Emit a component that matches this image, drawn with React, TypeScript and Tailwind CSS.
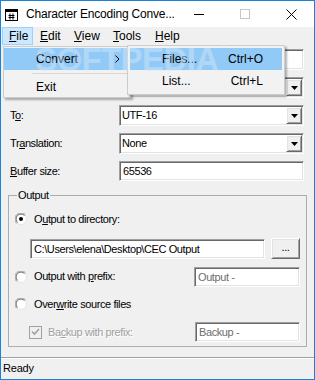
import React from "react";

const sunken =
  "border border-t-[#a0a0a0] border-l-[#a0a0a0] border-b-white border-r-white shadow-[inset_1px_1px_0_#696969,inset_-1px_-1px_0_#e3e3e3] bg-white";
const raised =
  "border border-t-white border-l-white border-b-[#696969] border-r-[#696969] shadow-[inset_1px_1px_0_#e3e3e3,inset_-1px_-1px_0_#a0a0a0] bg-[#f0f0f0]";

function DownArrow() {
  return (
    <svg width="7" height="4" viewBox="0 0 7 4">
      <path d="M0 0h7L3.5 4z" fill="#000" />
    </svg>
  );
}

function Combo({ value }: { value: string }) {
  return (
    <div className={`${sunken} flex h-[21px] w-[185px] items-stretch p-px`}>
      <span className="flex flex-1 items-center pl-[1px]">{value}</span>
      <span className={`${raised} flex w-[16px] items-center justify-center`}>
        <DownArrow />
      </span>
    </div>
  );
}

function Radio({ checked }: { checked?: boolean }) {
  return (
    <svg width="12" height="12" viewBox="0 0 12 12" className="shrink-0">
      <circle cx="6" cy="6" r="5.5" fill="#fff" stroke="#e3e3e3" />
      <path d="M1.6 10.4A5.5 5.5 0 0 1 10.4 1.6" fill="none" stroke="#a0a0a0" />
      <path d="M2.5 9.5A4.5 4.5 0 0 1 9.5 2.5" fill="none" stroke="#696969" />
      {checked && <circle cx="6" cy="6" r="2" fill="#000" />}
    </svg>
  );
}

function Field({ value, gray, className }: { value: string; gray?: boolean; className: string }) {
  return (
    <div className={`${sunken} flex h-[20px] items-center pl-[3px] ${gray ? "text-[#6d6d6d]" : ""} ${className}`}>
      {value}
    </div>
  );
}

export default function App() {
  return (
    <div className="relative flex h-[380px] w-[315px] flex-col overflow-hidden border border-[#1883d7] bg-[#f0f0f0] font-['Liberation_Sans',Arial,sans-serif] text-black">
      {/* Title bar */}
      <div className="flex h-[26px] items-center bg-white">
        <svg width="13" height="12" viewBox="0 0 13 12" className="ml-[4px] mt-[2px]">
          <rect x="0.5" y="0.5" width="12" height="11" fill="#fff" stroke="#000" />
          <rect x="0" y="0" width="13" height="3" fill="#000" />
          <path d="M5 4.5v6M8 4.5v6M3.5 6.5h6M3.5 8.5h6" stroke="#000" />
        </svg>
        <span className="ml-[8px] text-[12px] tracking-[-0.2px]">Character Encoding Conve...</span>
        <div className="ml-auto flex h-full">
          <div className="flex w-[46px] items-center justify-center">
            <svg width="10" height="10" viewBox="0 0 10 10">
              <path d="M0 5.5h10" stroke="#000" />
            </svg>
          </div>
          <div className="flex w-[46px] items-center justify-center">
            <svg width="10" height="10" viewBox="0 0 10 10">
              <rect x="0.5" y="0.5" width="9" height="9" fill="none" stroke="#c6c6c6" />
            </svg>
          </div>
          <div className="flex w-[46px] items-center justify-center">
            <svg width="11" height="11" viewBox="0 0 11 11">
              <path d="M0.5 0.5l10 10M10.5 0.5l-10 10" stroke="#000" />
            </svg>
          </div>
        </div>
      </div>

      {/* Menu bar */}
      <div className="flex h-[19px] items-start pl-[1px] text-[12px]">
        <span className="h-[18px] w-[31px] border border-[#99d1ff] bg-[#cce8ff] pl-[6px] leading-[16px]">
          <u>F</u>ile
        </span>
        <span className="h-[18px] w-[34px] pl-[7px] leading-[18px]">
          <u>E</u>dit
        </span>
        <span className="h-[18px] w-[39px] pl-[7px] leading-[18px]">
          <u>V</u>iew
        </span>
        <span className="h-[18px] w-[42px] pl-[7px] leading-[18px]">
          <u>T</u>ools
        </span>
        <span className="h-[18px] w-[38px] pl-[7px] leading-[18px]">
          <u>H</u>elp
        </span>
      </div>

      {/* Form (first two rows sit under the open menu) */}
      <div className="flex flex-col gap-[7px] pl-[9px] pt-[3px] text-[11px] tracking-[-0.4px]">
        <div className="flex h-[21px] items-center">
          <span className="w-[109px]" />
          <Field value="" className="h-[21px] w-[185px]" />
        </div>
        <div className="flex h-[21px] items-center">
          <span className="w-[109px]" />
          <Combo value="" />
        </div>
        <div className="flex h-[21px] items-center">
          <span className="w-[109px]">
            T<u>o</u>:
          </span>
          <Combo value="UTF-16" />
        </div>
        <div className="flex h-[21px] items-center">
          <span className="w-[109px]">
            Tr<u>a</u>nslation:
          </span>
          <Combo value="None" />
        </div>
        <div className="flex h-[20px] items-center">
          <span className="w-[109px]">
            <u>B</u>uffer size:
          </span>
          <Field value="65536" className="w-[185px] pl-[1px]" />
        </div>
      </div>

      {/* Output group */}
      <fieldset className="mx-[7px] mt-[8px] border border-[#adadad] p-0 text-[11px] tracking-[-0.4px]">
        <legend className="ml-[8px] px-[1px] leading-[13px]">Output</legend>
        <div className="flex flex-col pb-[4px] pr-[6px] pt-[9px]">
          <div className="flex h-[16px] items-center gap-[7px] pl-[6px]">
            <Radio checked />
            <span>
              O<u>u</u>tput to directory:
            </span>
          </div>
          <div className="mt-[11px] flex h-[21px] items-end gap-[6px] pl-[21px]">
            <Field value={"C:\\Users\\elena\\Desktop\\CEC Output"} className="w-[235px]" />
            <div className={`${raised} flex h-[21px] w-[29px] items-center justify-center pb-[2px]`}>...</div>
          </div>
          <div className="mt-[8px] flex h-[20px] items-center pl-[6px]">
            <Radio />
            <span className="ml-[7px] mt-[-2px]">
              Output with <u>p</u>refix:
            </span>
            <Field value="Output -" gray className="ml-auto w-[106px]" />
          </div>
          <div className="mt-[9px] flex h-[16px] items-center gap-[7px] pl-[6px]">
            <Radio />
            <span>
              Over<u>w</u>rite source files
            </span>
          </div>
          <div className="mt-[10px] flex h-[20px] items-center pl-[20px]">
            <span className="flex h-[13px] w-[13px] items-center justify-center border border-[#a0a0a0] bg-[#f0f0f0]">
              <svg width="9" height="8" viewBox="0 0 9 8">
                <path d="M1 3.5l2.5 2.5L8 1" fill="none" stroke="#a0a0a0" strokeWidth="1.6" />
              </svg>
            </span>
            <span className="ml-[6px] text-[#a0a0a0] [text-shadow:1px_1px_0_#fff]">
              Ba<u>c</u>kup with prefix:
            </span>
            <Field value="Backup -" gray className="ml-auto w-[105px]" />
          </div>
        </div>
      </fieldset>

      <div className="flex-1" />

      {/* Status bar */}
      <div className="flex h-[22px] items-center border-t border-[#a0a0a0] pl-[2px] text-[11px] tracking-[-0.2px] shadow-[inset_0_1px_0_#fff]">
        Ready
      </div>

      {/* Open File menu */}
      <div className="absolute left-[2px] top-[45px] w-[128px] border border-[#cccccc] bg-[#f2f2f2] pt-[1px] text-[12px] shadow-[2px_2px_2px_rgba(0,0,0,0.3)]">
        <div className="mr-[2px] flex h-[22px] items-center bg-[#91c9f7] pl-[32px]">
          <span>Convert</span>
          <svg width="5" height="8" viewBox="0 0 5 8" className="ml-auto mr-[8px]">
            <path d="M0.5 0.5l3.5 3.5l-3.5 3.5" fill="none" stroke="#000" />
          </svg>
        </div>
        <div className="flex h-[7px] items-center pl-[28px] pr-[2px]">
          <div className="h-px flex-1 bg-[#d7d7d7]" />
        </div>
        <div className="flex h-[20px] items-center pl-[32px]">Exit</div>
      </div>

      {/* Convert submenu */}
      <div className="absolute left-[126px] top-[44px] w-[158px] border border-[#cccccc] bg-[#f2f2f2] py-[2px] text-[12px] shadow-[2px_2px_2px_rgba(0,0,0,0.3)]">
        <div className="mx-[2px] flex h-[22px] items-center bg-[#91c9f7] pl-[32px] pr-[19px]">
          <span>Files...</span>
          <span className="ml-auto">Ctrl+O</span>
        </div>
        <div className="mx-[2px] flex h-[22px] items-center pl-[32px] pr-[19px]">
          <span>List...</span>
          <span className="ml-auto">Ctrl+L</span>
        </div>
      </div>

      {/* Watermark */}
      <div className="pointer-events-none absolute left-[34px] top-[41px] text-[33px] font-bold leading-[36px] tracking-[-0.6px] text-[rgba(220,234,248,0.45)]">
        SOFTPEDIA
        <span className="absolute right-[-8px] top-[0px] text-[8px] leading-[8px]">®</span>
      </div>
    </div>
  );
}
